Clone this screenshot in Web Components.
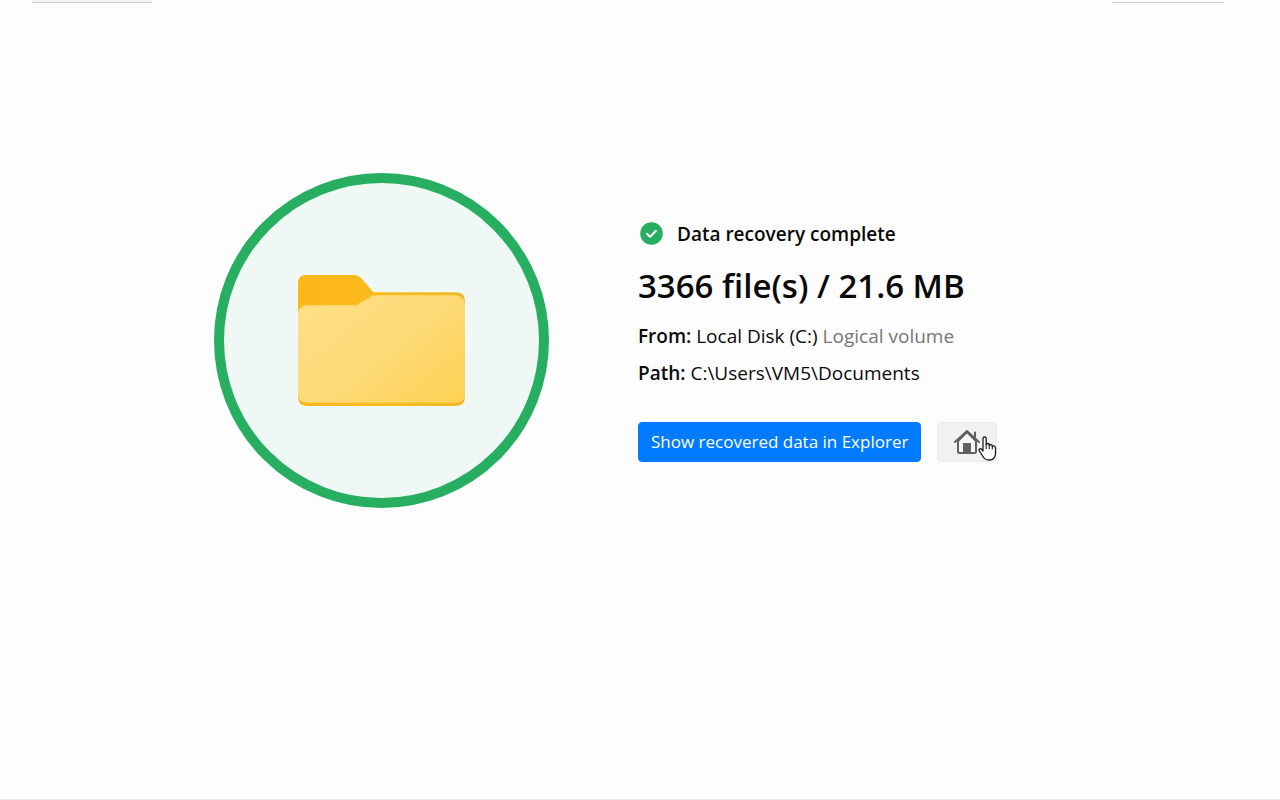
<!DOCTYPE html>
<html lang="en">
<head>
<meta charset="utf-8">
<meta name="viewport" content="width=device-width, initial-scale=1">
<title>Data recovery complete</title>
<style>
  body {
    margin: 0;
    background: #fdfdfd;
    color: #0a0a0a;
    font-family: "Open Sans", "Noto Sans", sans-serif;
  }
</style>
</head>
<body>
<recovery-page>
  <folder-badge slot="picture"></folder-badge>
  <recovery-summary status="Data recovery complete" total="3366 file(s) / 21.6 MB">
    <detail-row label="From:">Local Disk (C:) <span slot="note">Logical volume</span></detail-row>
    <detail-row label="Path:">C:\Users\VM5\Documents</detail-row>
    <action-button slot="actions" kind="primary">Show recovered data in Explorer</action-button>
    <action-button slot="actions" kind="icon" label="Home"><home-icon></home-icon></action-button>
  </recovery-summary>
</recovery-page>

<script>
function define(name, html, setup) {
  const template = document.createElement('template');
  template.innerHTML = html;

  customElements.define(name, class extends HTMLElement {
    constructor() {
      super();
      this.attachShadow({ mode: 'open' });
      this.shadowRoot.appendChild(template.content.cloneNode(true));
    }

    connectedCallback() {
      if (setup) setup(this, this.shadowRoot);
    }
  });
}

define('recovery-page', `
  <style>
    :host {
      display: flex;
      flex-direction: column;
      box-sizing: border-box;
      min-height: 100vh;
      border-bottom: 1px solid #e8e8e8;
    }
    header {
      display: flex;
      justify-content: space-between;
      padding: 0 56px 0 32px;
    }
    .edge {
      width: 120px;
      height: 2px;
      background: #f3f3f3;
      border-bottom: 1px solid #d0d0d0;
    }
    .edge.end {
      width: 112px;
      background: none;
    }
    main {
      display: flex;
      flex-wrap: wrap;
      justify-content: center;
      align-items: center;
      gap: 40px 89px;
      padding: 170px 16px 40px;
    }
    ::slotted(recovery-summary) {
      flex: 0 1 428px;
    }
  </style>
  <header><div class="edge"></div><div class="edge end"></div></header>
  <main><slot name="picture"></slot><slot></slot></main>
`);

define('folder-badge', `
  <style>
    :host {
      display: grid;
      place-items: center;
      box-sizing: border-box;
      width: 335px;
      aspect-ratio: 1;
      border: 10px solid #27ae60;
      border-radius: 50%;
      background: #f0f8f5;
    }
    svg {
      display: block;
      width: 167px;
      height: 131px;
    }
  </style>
  <svg viewBox="0 0 166 130" aria-hidden="true">
    <defs>
      <linearGradient id="front" x1="0" y1="0.1" x2="1" y2="0.9">
        <stop offset="0" stop-color="#ffdf86"/>
        <stop offset="0.5" stop-color="#fdda77"/>
        <stop offset="1" stop-color="#fdd256"/>
      </linearGradient>
      <linearGradient id="back" x1="0" y1="0" x2="1" y2="0">
        <stop offset="0" stop-color="#fdb61a"/>
        <stop offset="0.5" stop-color="#fbbb1d"/>
        <stop offset="1" stop-color="#efb92a"/>
      </linearGradient>
    </defs>
    <path fill="url(#back)" d="M8 0H56Q60 0 63 3L75 17H157Q166 17 166 26V121Q166 130 157 130H9Q0 130 0 121V8Q0 0 8 0Z"/>
    <path fill="url(#front)" d="M8 30H55Q59 30 63 27L70 23Q73 20 78 20H157Q165 21 166 29V119Q165 127 157 127H9Q1 127 0 119V38Q1 31 8 30Z"/>
  </svg>
`);

define('recovery-summary', `
  <style>
    :host {
      display: block;
    }
    .status {
      display: flex;
      align-items: center;
      gap: 14px;
      margin: 0 0 0 2px;
      font-size: 19px;
      font-weight: 600;
      line-height: 28px;
    }
    .status svg {
      flex: none;
      width: 23px;
      height: 23px;
    }
    h1 {
      margin: 10px 0 4px;
      font-size: 33px;
      font-weight: 600;
      line-height: 56px;
    }
    .actions {
      display: flex;
      flex-wrap: wrap;
      gap: 16px;
      margin-top: 30px;
    }
  </style>
  <p class="status">
    <svg viewBox="0 0 23 23" aria-hidden="true">
      <circle cx="11.5" cy="11.5" r="11.3" fill="#27ae60"/>
      <path d="M7 11.8L10 14.7L16 8.8" fill="none" stroke="#fff" stroke-width="2" stroke-linecap="round" stroke-linejoin="round"/>
    </svg>
    <span id="status"></span>
  </p>
  <h1></h1>
  <slot></slot>
  <div class="actions"><slot name="actions"></slot></div>
`, (host, root) => {
  root.querySelector('#status').textContent = host.getAttribute('status');
  root.querySelector('h1').textContent = host.getAttribute('total');
});

define('detail-row', `
  <style>
    :host {
      display: block;
      font-size: 19px;
      line-height: 37px;
    }
    b {
      font-weight: 600;
    }
    ::slotted(span) {
      color: #767676;
    }
  </style>
  <b></b> <slot></slot> <slot name="note"></slot>
`, (host, root) => {
  root.querySelector('b').textContent = host.getAttribute('label');
});

define('action-button', `
  <style>
    :host {
      display: block;
    }
    button {
      display: flex;
      align-items: center;
      justify-content: center;
      box-sizing: border-box;
      height: 40px;
      padding: 0 12px;
      border: 1px solid #007bff;
      border-radius: 4px;
      background: #007bff;
      color: #fff;
      font: inherit;
      font-size: 17px;
      line-height: 24px;
      cursor: pointer;
    }
    :host([kind="icon"]) button {
      width: 60px;
      border-color: #ebebeb;
      background: #f1f1f1;
    }
  </style>
  <button type="button"><slot></slot></button>
`, (host, root) => {
  const label = host.getAttribute('label');
  if (label) root.querySelector('button').setAttribute('aria-label', label);
});

define('home-icon', `
  <style>
    :host {
      display: block;
      position: relative;
      width: 26px;
      height: 26px;
    }
    svg {
      display: block;
    }
    /* hand pointer resting over the button */
    .pointer {
      position: absolute;
      left: 24px;
      top: 7px;
    }
  </style>
  <svg width="26" height="26" viewBox="0 0 26 26" fill="none" stroke="#606060" stroke-width="2" stroke-linejoin="round" stroke-linecap="round" aria-hidden="true">
    <path fill="#f8f8f8" d="M4 12V22.500Q4 24 5.500 24H20.500Q22 24 22 22.500V12L13 3Z"/>
    <path d="M1 13L13 2L25 13M21 3.500V8"/>
    <path fill="#606060" stroke="none" d="M9 14H17V24H9Z"/>
  </svg>
  <svg class="pointer" width="19" height="25" viewBox="0 0 19 25" aria-hidden="true">
    <path fill="#fff" stroke="#1c1c1c" stroke-width="1.300" stroke-linejoin="round" d="M5 15V2.800Q5 1 6.600 1Q8.200 1 8.200 2.800V8.500Q8.400 7.300 9.800 7.500Q11.200 7.700 11.200 9.300Q11.700 8.300 13 8.600Q14.300 8.900 14.300 10.400Q14.800 9.600 16 9.900Q17.500 10.300 17.500 12V17Q17.500 24 10.800 24Q7 24 5 20.500L1.300 15Q.6 13.800 1.600 13Q2.700 12.300 3.700 13.400Z"/>
    <path fill="none" stroke="#1c1c1c" stroke-width="1.100" d="M8.200 8V13M11.200 9V13M14.300 10V13.500"/>
  </svg>
`);
</script>
</body>
</html>
